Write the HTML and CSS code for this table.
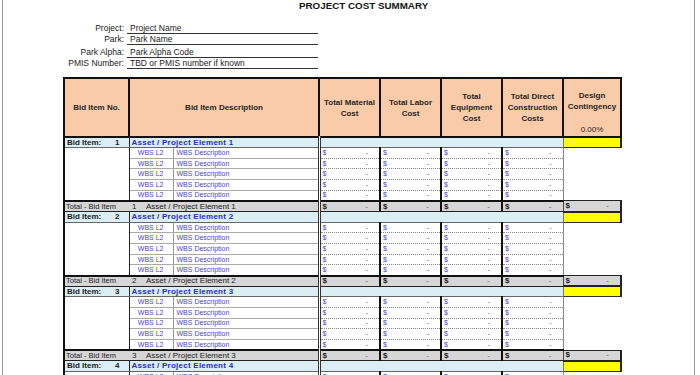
FILE: index.html
```html
<!DOCTYPE html>
<html>
<head>
<meta charset="utf-8">
<link rel="stylesheet" href="styles.css">
</head>
<body>
<div class="page">
  <div class="title">PROJECT COST SUMMARY</div>
  <div class="info">
    <div class="lbl">Project:</div><div class="val">Project Name</div>
    <div class="lbl">Park:</div><div class="val">Park Name</div>
    <div class="lbl">Park Alpha:</div><div class="val">Park Alpha Code</div>
    <div class="lbl">PMIS Number:</div><div class="val">TBD or PMIS number if known</div>
  </div>
  <table class="sheet">
    <colgroup>
      <col class="w1"><col class="w2a"><col class="w2b"><col class="wm"><col class="wm"><col class="wm"><col class="wm"><col class="wd">
    </colgroup>
    <tr class="head">
      <th>Bid Item No.</th>
      <th colspan="2">Bid Item Description</th>
      <th>Total Material<br>Cost</th>
      <th>Total Labor<br>Cost</th>
      <th>Total<br>Equipment<br>Cost</th>
      <th>Total Direct<br>Construction<br>Costs</th>
      <th class="dh"><div class="dh-in"><span>Design<br>Contingency</span><span class="pct">0.00%</span></div></th>
    </tr>

    <tr class="bid">
      <td class="c1"><div class="bid-no"><span>Bid Item:</span><span>1</span></div></td>
      <td class="name" colspan="2">Asset / Project Element 1</td>
      <td class="blue" colspan="4"></td>
      <td class="yel"></td>
    </tr>
    <tr class="wbs">
      <td class="blank" rowspan="5"></td>
      <td class="l2">WBS L2</td><td class="desc">WBS Description</td>
      <td class="m m1"><div class="amt"><span>$</span><span>-</span></div></td>
      <td class="m"><div class="amt"><span>$</span><span>-</span></div></td>
      <td class="m"><div class="amt"><span>$</span><span>-</span></div></td>
      <td class="m"><div class="amt"><span>$</span><span>-</span></div></td>
      <td class="dc" rowspan="5"></td>
    </tr>
    <tr class="wbs">
      <td class="l2">WBS L2</td><td class="desc">WBS Description</td>
      <td class="m m1"><div class="amt"><span>$</span><span>-</span></div></td>
      <td class="m"><div class="amt"><span>$</span><span>-</span></div></td>
      <td class="m"><div class="amt"><span>$</span><span>-</span></div></td>
      <td class="m"><div class="amt"><span>$</span><span>-</span></div></td>
    </tr>
    <tr class="wbs">
      <td class="l2">WBS L2</td><td class="desc">WBS Description</td>
      <td class="m m1"><div class="amt"><span>$</span><span>-</span></div></td>
      <td class="m"><div class="amt"><span>$</span><span>-</span></div></td>
      <td class="m"><div class="amt"><span>$</span><span>-</span></div></td>
      <td class="m"><div class="amt"><span>$</span><span>-</span></div></td>
    </tr>
    <tr class="wbs">
      <td class="l2">WBS L2</td><td class="desc">WBS Description</td>
      <td class="m m1"><div class="amt"><span>$</span><span>-</span></div></td>
      <td class="m"><div class="amt"><span>$</span><span>-</span></div></td>
      <td class="m"><div class="amt"><span>$</span><span>-</span></div></td>
      <td class="m"><div class="amt"><span>$</span><span>-</span></div></td>
    </tr>
    <tr class="wbs">
      <td class="l2">WBS L2</td><td class="desc">WBS Description</td>
      <td class="m m1"><div class="amt"><span>$</span><span>-</span></div></td>
      <td class="m"><div class="amt"><span>$</span><span>-</span></div></td>
      <td class="m"><div class="amt"><span>$</span><span>-</span></div></td>
      <td class="m"><div class="amt"><span>$</span><span>-</span></div></td>
    </tr>
    <tr class="tot">
      <td class="tl">Total - Bid Item</td>
      <td class="tn" colspan="2"><span class="n">1</span>Asset / Project Element 1</td>
      <td class="m m1"><div class="amt"><span>$</span><span>-</span></div></td>
      <td class="m"><div class="amt"><span>$</span><span>-</span></div></td>
      <td class="m"><div class="amt"><span>$</span><span>-</span></div></td>
      <td class="m"><div class="amt"><span>$</span><span>-</span></div></td>
      <td class="m dt"><div class="amt"><span>$</span><span>-</span></div></td>
    </tr>

    <tr class="bid">
      <td class="c1"><div class="bid-no"><span>Bid Item:</span><span>2</span></div></td>
      <td class="name" colspan="2">Asset / Project Element 2</td>
      <td class="blue" colspan="4"></td>
      <td class="yel"></td>
    </tr>
    <tr class="wbs">
      <td class="blank" rowspan="5"></td>
      <td class="l2">WBS L2</td><td class="desc">WBS Description</td>
      <td class="m m1"><div class="amt"><span>$</span><span>-</span></div></td>
      <td class="m"><div class="amt"><span>$</span><span>-</span></div></td>
      <td class="m"><div class="amt"><span>$</span><span>-</span></div></td>
      <td class="m"><div class="amt"><span>$</span><span>-</span></div></td>
      <td class="dc" rowspan="5"></td>
    </tr>
    <tr class="wbs">
      <td class="l2">WBS L2</td><td class="desc">WBS Description</td>
      <td class="m m1"><div class="amt"><span>$</span><span>-</span></div></td>
      <td class="m"><div class="amt"><span>$</span><span>-</span></div></td>
      <td class="m"><div class="amt"><span>$</span><span>-</span></div></td>
      <td class="m"><div class="amt"><span>$</span><span>-</span></div></td>
    </tr>
    <tr class="wbs">
      <td class="l2">WBS L2</td><td class="desc">WBS Description</td>
      <td class="m m1"><div class="amt"><span>$</span><span>-</span></div></td>
      <td class="m"><div class="amt"><span>$</span><span>-</span></div></td>
      <td class="m"><div class="amt"><span>$</span><span>-</span></div></td>
      <td class="m"><div class="amt"><span>$</span><span>-</span></div></td>
    </tr>
    <tr class="wbs">
      <td class="l2">WBS L2</td><td class="desc">WBS Description</td>
      <td class="m m1"><div class="amt"><span>$</span><span>-</span></div></td>
      <td class="m"><div class="amt"><span>$</span><span>-</span></div></td>
      <td class="m"><div class="amt"><span>$</span><span>-</span></div></td>
      <td class="m"><div class="amt"><span>$</span><span>-</span></div></td>
    </tr>
    <tr class="wbs">
      <td class="l2">WBS L2</td><td class="desc">WBS Description</td>
      <td class="m m1"><div class="amt"><span>$</span><span>-</span></div></td>
      <td class="m"><div class="amt"><span>$</span><span>-</span></div></td>
      <td class="m"><div class="amt"><span>$</span><span>-</span></div></td>
      <td class="m"><div class="amt"><span>$</span><span>-</span></div></td>
    </tr>
    <tr class="tot">
      <td class="tl">Total - Bid Item</td>
      <td class="tn" colspan="2"><span class="n">2</span>Asset / Project Element 2</td>
      <td class="m m1"><div class="amt"><span>$</span><span>-</span></div></td>
      <td class="m"><div class="amt"><span>$</span><span>-</span></div></td>
      <td class="m"><div class="amt"><span>$</span><span>-</span></div></td>
      <td class="m"><div class="amt"><span>$</span><span>-</span></div></td>
      <td class="m dt"><div class="amt"><span>$</span><span>-</span></div></td>
    </tr>

    <tr class="bid">
      <td class="c1"><div class="bid-no"><span>Bid Item:</span><span>3</span></div></td>
      <td class="name" colspan="2">Asset / Project Element 3</td>
      <td class="blue" colspan="4"></td>
      <td class="yel"></td>
    </tr>
    <tr class="wbs">
      <td class="blank" rowspan="5"></td>
      <td class="l2">WBS L2</td><td class="desc">WBS Description</td>
      <td class="m m1"><div class="amt"><span>$</span><span>-</span></div></td>
      <td class="m"><div class="amt"><span>$</span><span>-</span></div></td>
      <td class="m"><div class="amt"><span>$</span><span>-</span></div></td>
      <td class="m"><div class="amt"><span>$</span><span>-</span></div></td>
      <td class="dc" rowspan="5"></td>
    </tr>
    <tr class="wbs">
      <td class="l2">WBS L2</td><td class="desc">WBS Description</td>
      <td class="m m1"><div class="amt"><span>$</span><span>-</span></div></td>
      <td class="m"><div class="amt"><span>$</span><span>-</span></div></td>
      <td class="m"><div class="amt"><span>$</span><span>-</span></div></td>
      <td class="m"><div class="amt"><span>$</span><span>-</span></div></td>
    </tr>
    <tr class="wbs">
      <td class="l2">WBS L2</td><td class="desc">WBS Description</td>
      <td class="m m1"><div class="amt"><span>$</span><span>-</span></div></td>
      <td class="m"><div class="amt"><span>$</span><span>-</span></div></td>
      <td class="m"><div class="amt"><span>$</span><span>-</span></div></td>
      <td class="m"><div class="amt"><span>$</span><span>-</span></div></td>
    </tr>
    <tr class="wbs">
      <td class="l2">WBS L2</td><td class="desc">WBS Description</td>
      <td class="m m1"><div class="amt"><span>$</span><span>-</span></div></td>
      <td class="m"><div class="amt"><span>$</span><span>-</span></div></td>
      <td class="m"><div class="amt"><span>$</span><span>-</span></div></td>
      <td class="m"><div class="amt"><span>$</span><span>-</span></div></td>
    </tr>
    <tr class="wbs">
      <td class="l2">WBS L2</td><td class="desc">WBS Description</td>
      <td class="m m1"><div class="amt"><span>$</span><span>-</span></div></td>
      <td class="m"><div class="amt"><span>$</span><span>-</span></div></td>
      <td class="m"><div class="amt"><span>$</span><span>-</span></div></td>
      <td class="m"><div class="amt"><span>$</span><span>-</span></div></td>
    </tr>
    <tr class="tot">
      <td class="tl">Total - Bid Item</td>
      <td class="tn" colspan="2"><span class="n">3</span>Asset / Project Element 3</td>
      <td class="m m1"><div class="amt"><span>$</span><span>-</span></div></td>
      <td class="m"><div class="amt"><span>$</span><span>-</span></div></td>
      <td class="m"><div class="amt"><span>$</span><span>-</span></div></td>
      <td class="m"><div class="amt"><span>$</span><span>-</span></div></td>
      <td class="m dt"><div class="amt"><span>$</span><span>-</span></div></td>
    </tr>

    <tr class="bid">
      <td class="c1"><div class="bid-no"><span>Bid Item:</span><span>4</span></div></td>
      <td class="name" colspan="2">Asset / Project Element 4</td>
      <td class="blue" colspan="4"></td>
      <td class="yel"></td>
    </tr>
    <tr class="wbs">
      <td class="blank" rowspan="5"></td>
      <td class="l2">WBS L2</td><td class="desc">WBS Description</td>
      <td class="m m1"><div class="amt"><span>$</span><span>-</span></div></td>
      <td class="m"><div class="amt"><span>$</span><span>-</span></div></td>
      <td class="m"><div class="amt"><span>$</span><span>-</span></div></td>
      <td class="m"><div class="amt"><span>$</span><span>-</span></div></td>
      <td class="dc" rowspan="5"></td>
    </tr>
    <tr class="wbs">
      <td class="l2">WBS L2</td><td class="desc">WBS Description</td>
      <td class="m m1"><div class="amt"><span>$</span><span>-</span></div></td>
      <td class="m"><div class="amt"><span>$</span><span>-</span></div></td>
      <td class="m"><div class="amt"><span>$</span><span>-</span></div></td>
      <td class="m"><div class="amt"><span>$</span><span>-</span></div></td>
    </tr>
  </table>
</div>
</body>
</html>
```

FILE: styles.css
```css
* { box-sizing: border-box; }
html, body { margin: 0; padding: 0; background: #fff; }
body { font-family: "Liberation Sans", Arial, sans-serif; color: #1c1c1c; }

.page {
  margin-left: 2px;
  width: 693px;
  height: 375px;
  border-left: 1px solid #9a9a9a;
  border-right: 1px solid #9a9a9a;
  overflow: hidden;
}

.title {
  padding-left: 296px;
  height: 12px;
  font-size: 9.8px;
  line-height: 12px;
  font-weight: bold;
  color: #151515;
}

.info {
  margin-top: 11px;
  display: grid;
  grid-template-columns: 121px 191px;
  grid-template-rows: 11px 11px 13px 11px;
  column-gap: 3px;
  font-size: 8.5px;
  line-height: 10px;
  color: #222;
}
.lbl { text-align: right; align-self: end; height: 11px; }
.val {
  align-self: end;
  height: 11px;
  padding-left: 3px;
  border-bottom: 1px solid #333;
}

.sheet {
  margin-left: 60px;
  margin-top: 8px;
  border-collapse: collapse;
  table-layout: fixed;
  width: 558px;
  font-size: 8px;
}
.w1 { width: 65px; }
.w2a { width: 44px; }
.w2b { width: 146px; }
.wm { width: 61px; }
.wd { width: 58px; }

.sheet td {
  padding: 0;
  height: 10.667px;
  line-height: 8px;
  white-space: nowrap;
  overflow: hidden;
  vertical-align: middle;
}

.head th {
  height: 59px;
  padding: 0;
  background: #f9cba8;
  border: 2px solid #111;
  font-size: 8px;
  line-height: 11px;
  font-weight: bold;
  color: #262626;
  text-align: center;
  vertical-align: middle;
}
.head .dh { vertical-align: top; }
.dh-in {
  height: 56px;
  display: flex;
  flex-direction: column;
  justify-content: space-between;
  padding-top: 11px;
}
.pct { font-weight: normal; line-height: 10px; }

/* bid item row */
.bid td { background: #dbeef4; border-bottom: 1px solid #666; }
.bid .c1 { border-left: 2px solid #111; border-right: 1px solid #222; font-weight: bold; padding: 0 9px 0 2px; }
.bid-no { display: flex; justify-content: space-between; }
.bid .name {
  color: #2a2ad0;
  font-weight: bold;
  padding-left: 2px;
  letter-spacing: 0.25px;
  border-right: 3px double #333;
}
.bid .yel {
  background: #ffff00;
  border-right: 2px solid #222;
  border-bottom: 1px solid #333;
  border-left: 1px solid #777;
}

/* wbs rows */
.wbs td { font-size: 7px; }
.wbs .blank { border-left: 2px solid #111; border-right: 1px solid #222; background: #fff; }
.wbs .l2 {
  color: #4646c8;
  text-align: right;
  padding-right: 9px;
  border-right: 1px solid #999;
  border-bottom: 1px solid #aaa;
}
.wbs .desc {
  color: #4646c8;
  padding-left: 3px;
  border-bottom: 1px solid #aaa;
  border-right: 3px double #333;
}
.wbs .m { border-bottom: 1px dotted #888; border-left: 2px solid #111; }
.wbs .m1 { border-left: 3px double #333; }
.wbs .dc { border-left: 1px solid #888; background: #fff; }

.amt { display: flex; justify-content: space-between; padding: 0 11px 0 2px; line-height: 8px; }
.wbs .amt span:first-child { color: #4848cc; }
.amt span:last-child { color: #666; }

/* total rows */
.tot td {
  background: #d6d6d6;
  border-top: 2px solid #111;
  border-bottom: 1px solid #222;
}
.tot .tl { border-left: 2px solid #111; padding-left: 1px; font-size: 7.5px; color: #222; }
.tot .tn { font-size: 8px; color: #222; padding-left: 3px; border-right: 3px double #333; }
.tot .n { display: inline-block; width: 14px; }
.tot .m { border-left: 2px solid #111; font-weight: bold; }
.tot .m1 { border-left: 3px double #333; }
.tot .amt span:last-child { font-weight: normal; }
.tot .dt { border: 1px solid #222; border-left: 1px solid #444; border-right: 2px solid #222; border-bottom: 2px solid #222; }
```
